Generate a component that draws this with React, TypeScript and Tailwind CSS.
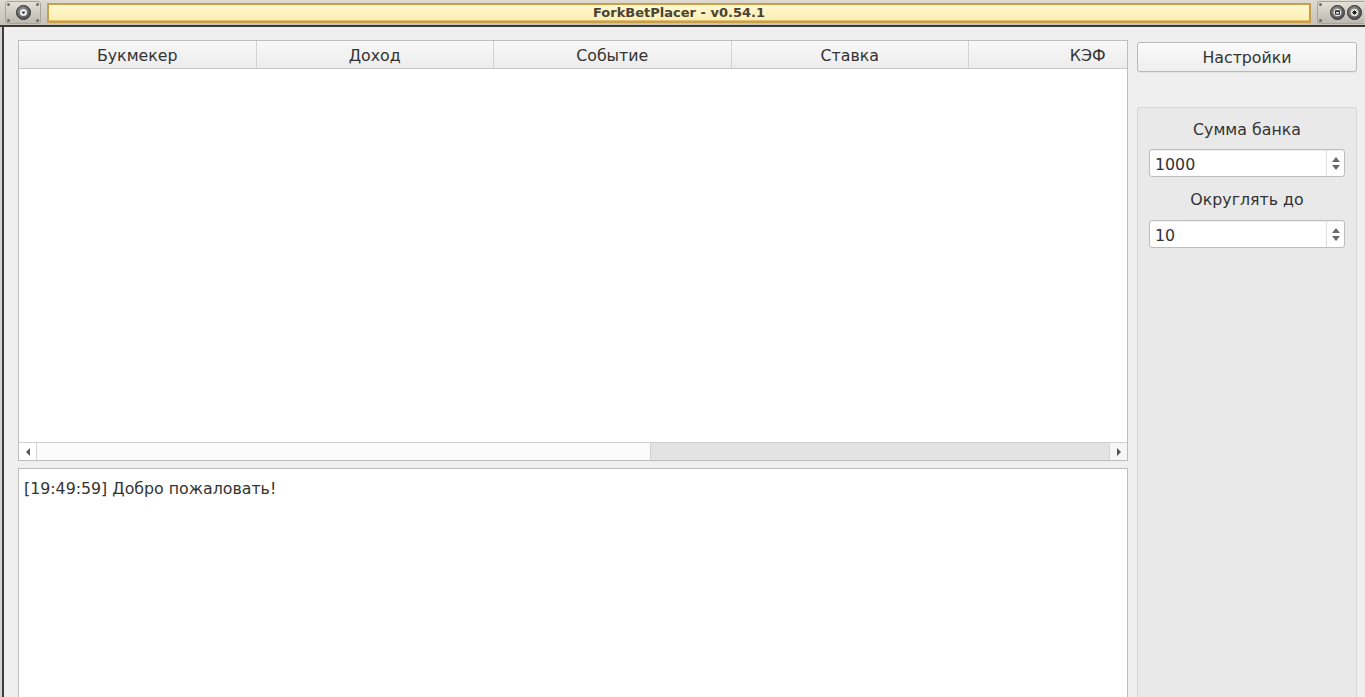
import { useState } from "react";

const FONT = "font-['DejaVu_Sans',sans-serif]";

// заголовки колонок таблицы вилок
const COLUMNS = ["Букмекер", "Доход", "Событие", "Ставка", "КЭФ"];

function Rivet({ className }: { className: string }) {
  return <span className={`absolute w-[3px] h-[3px] rounded-full bg-[#6e6a62] ${className}`} />;
}

function TitleButton({ kind }: { kind: "menu" | "max" | "close" }) {
  return (
    <span className="relative flex items-center justify-center w-[15px] h-[15px] rounded-full bg-[radial-gradient(circle_at_40%_35%,#9a9a9a,#3a3a3a)] border border-[#2c2c2c]">
      {kind === "menu" && (
        <svg width="9" height="9" viewBox="0 0 9 9">
          <circle cx="4.5" cy="4.5" r="3.6" fill="#e8e8e8" />
          <path d="M2.5 3.8 L6.5 3.8 L4.5 6 Z" fill="#222" />
        </svg>
      )}
      {kind === "max" && (
        <svg width="9" height="9" viewBox="0 0 9 9">
          <circle cx="4.5" cy="4.5" r="3.8" fill="#e8e8e8" />
          <rect x="2.6" y="2.8" width="3.8" height="3.4" fill="none" stroke="#222" strokeWidth="1" />
          <rect x="2.6" y="2.8" width="3.8" height="1" fill="#222" />
        </svg>
      )}
      {kind === "close" && (
        <svg width="9" height="9" viewBox="0 0 9 9">
          <circle cx="4.5" cy="4.5" r="3.8" fill="#e8e8e8" />
          <path d="M2.8 2.8 L6.2 6.2 M6.2 2.8 L2.8 6.2 M4.5 2.3 L4.5 6.7 M2.3 4.5 L6.7 4.5" stroke="#222" strokeWidth="1" />
        </svg>
      )}
    </span>
  );
}

function TitleBar() {
  return (
    <div className="flex items-center h-[27px] bg-[linear-gradient(#dedad2,#c6c2ba)] border-b-2 border-[#3a3a3a] pl-[5px] pr-[1px] gap-[6px]">
      <div className="relative flex items-center justify-center w-[36px] h-[23px] rounded-[3px] bg-[linear-gradient(#e4e0d8,#bcb8b0)] border border-[#a8a49c]">
        <Rivet className="left-[1px] top-[1px]" />
        <Rivet className="right-[1px] top-[1px]" />
        <Rivet className="left-[1px] bottom-[1px]" />
        <Rivet className="right-[1px] bottom-[1px]" />
        <TitleButton kind="menu" />
      </div>
      <div className="flex-1 h-[20px] flex items-center justify-center border-2 border-[#c8a048] bg-[linear-gradient(#fff8d0,#fcefb4)] shadow-[inset_0_-1px_0_#e0c070]">
        <span className={`${FONT} text-[13px] font-bold text-[#4a4232] leading-none`}>ForkBetPlacer - v0.54.1</span>
      </div>
      <div className="relative flex items-center justify-end gap-[2px] w-[47px] h-[23px] pr-[2px] rounded-l-[3px] bg-[linear-gradient(#e4e0d8,#bcb8b0)] border border-r-0 border-[#a8a49c]">
        <Rivet className="left-[1px] top-[1px]" />
        <Rivet className="left-[1px] bottom-[1px]" />
        <TitleButton kind="max" />
        <TitleButton kind="close" />
      </div>
    </div>
  );
}

function BetTable() {
  return (
    <div className="h-[421px] flex flex-col border border-[#bdbdbd] bg-white overflow-hidden">
      <div className="flex h-[28px] shrink-0 bg-[linear-gradient(#f8f8f8,#ececec)] border-b border-[#c8c8c8]">
        {COLUMNS.map((c, i) => (
          <div
            key={c}
            className={`w-[237.5px] shrink-0 flex items-center justify-center pt-[3px] ${i < COLUMNS.length - 1 ? "border-r border-[#d2d2d2]" : ""}`}
          >
            {c}
          </div>
        ))}
      </div>
      <div className="flex-1" />
      <div className="flex h-[18px] shrink-0 border-t border-[#cfcfcf] bg-white">
        <div className="w-[18px] flex items-center justify-center border-r border-[#d4d4d4]">
          <svg width="6" height="8" viewBox="0 0 6 8"><path d="M5 0 L1 4 L5 8 Z" fill="#555" /></svg>
        </div>
        <div className="w-[613px] bg-[#fbfbfb]" />
        <div className="flex-1 bg-[#e3e3e3] border-l border-[#d0d0d0]" />
        <div className="w-[18px] flex items-center justify-center border-l border-[#d4d4d4] bg-[#f6f6f6]">
          <svg width="6" height="8" viewBox="0 0 6 8"><path d="M1 0 L5 4 L1 8 Z" fill="#555" /></svg>
        </div>
      </div>
    </div>
  );
}

function SpinBox({ value }: { value: string }) {
  return (
    <div className="mx-[11px] h-[28px] flex bg-white border border-[#bdbdbd] rounded-[3px] shadow-[inset_0_1px_1px_rgba(0,0,0,0.06)]">
      <div className="flex-1 flex items-center pl-[5px] pt-[3px]">{value}</div>
      <div className="w-[18px] flex flex-col items-center justify-center gap-[3px] border-l border-[#dedede]">
        <svg width="8" height="5" viewBox="0 0 8 5"><path d="M0 5 L4 0 L8 5 Z" fill="#6a6a6a" /></svg>
        <svg width="8" height="5" viewBox="0 0 8 5"><path d="M0 0 L4 5 L8 0 Z" fill="#6a6a6a" /></svg>
      </div>
    </div>
  );
}

export default function App() {
  const [bank] = useState("1000");
  const [round] = useState("10");

  return (
    <div className={`${FONT} text-[15.8px] text-[#333333] w-[1365px] h-[697px] overflow-hidden flex flex-col bg-[#efefef]`}>
      <TitleBar />
      <div className="flex-1 flex min-h-0">
        {/* рамка окна слева */}
        <div className="w-[2px] bg-[#d6d6d6]" />
        <div className="w-[2px] bg-[#3c3c3c]" />
        <div className="flex-1 flex gap-[9px] pl-[14px] pr-[8px] pt-[13px] min-h-0">
          <div className="w-[1110px] flex flex-col gap-[7px] min-h-0">
            <BetTable />
            <div className="flex-1 border border-[#bdbdbd] border-b-0 bg-white px-[5px] pt-[8px]">
              [19:49:59] Добро пожаловать!
            </div>
          </div>
          <div className="flex-1 flex flex-col pt-[2px] min-h-0">
            <button className="h-[30px] pt-[2px] rounded-[3px] border border-[#b9b9b9] bg-[linear-gradient(#fbfbfb,#ededed)] shadow-[0_1px_0_rgba(0,0,0,0.05)]">
              Настройки
            </button>
            <div className="mt-[35px] flex-1 border border-[#d6d6d6] border-b-0 rounded-t-[3px] bg-[#e9e9e9] flex flex-col">
              <div className="pt-[12px] h-[41px] text-center leading-[19px]">Сумма банка</div>
              <SpinBox value={bank} />
              <div className="h-[43px] flex items-center justify-center pt-[2px]">Округлять до</div>
              <SpinBox value={round} />
            </div>
          </div>
        </div>
      </div>
    </div>
  );
}
